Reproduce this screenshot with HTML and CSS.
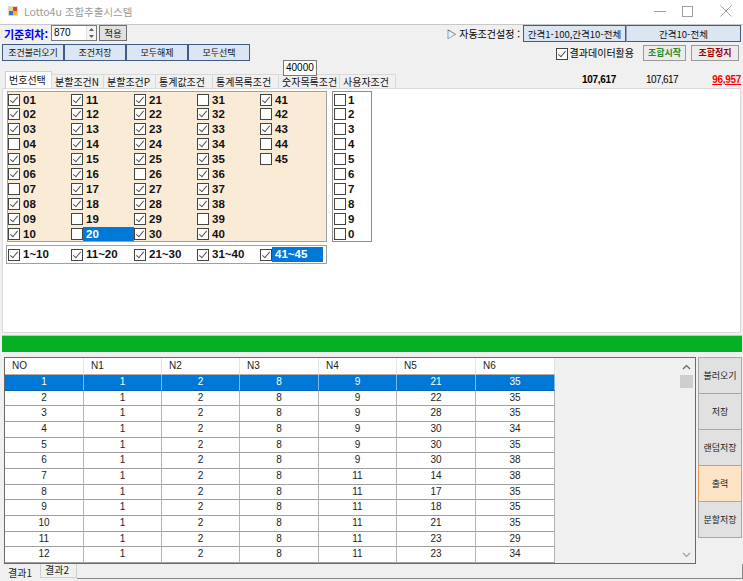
FILE: index.html
```html
<!DOCTYPE html>
<html lang="ko">
<head>
<meta charset="utf-8">
<title>Lotto4u 조합추출시스템</title>
<link rel="stylesheet" href="styles.css">
</head>
<body>
<div class="window">
  <div class="titlebar">
    <svg class="app-icon" width="10" height="10" viewBox="0 0 10 10">
      <rect x="0" y="0" width="10" height="10" fill="#d8d8d8"/>
      <rect x="1" y="1" width="4" height="4" fill="#f4d27a"/>
      <rect x="5" y="1" width="4" height="4" fill="#e0402f"/>
      <rect x="1" y="5" width="4" height="4" fill="#3a72d8"/>
      <rect x="5" y="5" width="4" height="4" fill="#f2b531"/>
    </svg>
    <span class="title">Lotto4u 조합추출시스템</span>
    <div class="win-controls">
      <svg class="wc-min" width="12" height="10" viewBox="0 0 12 10"><line x1="0" y1="5.5" x2="12" y2="5.5" stroke="#a0a0a0" stroke-width="1"/></svg>
      <svg class="wc-max" width="11" height="11" viewBox="0 0 11 11"><rect x="0.5" y="0.5" width="10" height="10" fill="none" stroke="#a0a0a0" stroke-width="1"/></svg>
      <svg class="wc-close" width="12" height="12" viewBox="0 0 12 12"><path d="M0.5 0.5 L11.5 11.5 M11.5 0.5 L0.5 11.5" stroke="#a0a0a0" stroke-width="1"/></svg>
    </div>
  </div>

  <div class="row row1">
    <span class="round-label">기준회차:</span>
    <div class="spin">
      <span class="spin-val">870</span>
      <div class="spin-btns">
        <svg width="9" height="7" viewBox="0 0 9 7"><path d="M2 5 L4.5 2 L7 5 Z" fill="#606060"/></svg>
        <svg width="9" height="7" viewBox="0 0 9 7"><path d="M2 2 L4.5 5 L7 2 Z" fill="#606060"/></svg>
      </div>
    </div>
    <div class="btn btn-gray btn-apply">적용</div>
    <span class="auto-label">▷ 자동조건설정 :</span>
    <div class="btn btn-blue auto1">간격1-100,간격10-전체</div>
    <div class="btn btn-blue auto2">간격10-전체</div>
  </div>

  <div class="row row2">
    <div class="btn btn-blue cond">조건불러오기</div>
    <div class="btn btn-blue cond">조건저장</div>
    <div class="btn btn-blue cond">모두해제</div>
    <div class="btn btn-blue cond">모두선택</div>
    <label class="use-data"><span class="cb on"></span><span>결과데이터활용</span></label>
    <div class="btn btn-gray start">조합시작</div>
    <div class="btn btn-gray stop">조합정지</div>
  </div>

  <div class="row row3">
    <div class="limit-box">40000</div>
    <div class="tabs">
      <div class="tab active w46">번호선택</div>
      <div class="tab w52">분할조건N</div>
      <div class="tab w52">분할조건P</div>
      <div class="tab w58">통계값조건</div>
      <div class="tab w67">통계목록조건</div>
      <div class="tab w61">숫자목록조건</div>
      <div class="tab w56">사용자조건</div>
    </div>
    <div class="stats">
      <span class="stat s1">107,617</span>
      <span class="stat s2">107,617</span>
      <span class="stat s3">96,957</span>
    </div>
  </div>

  <div class="content">
    <div class="top-panels">
      <div class="num-panel">
        <div class="item"><span class="cb on"></span><span class="lab">01</span></div>
        <div class="item"><span class="cb on"></span><span class="lab">02</span></div>
        <div class="item"><span class="cb on"></span><span class="lab">03</span></div>
        <div class="item"><span class="cb"></span><span class="lab">04</span></div>
        <div class="item"><span class="cb on"></span><span class="lab">05</span></div>
        <div class="item"><span class="cb on"></span><span class="lab">06</span></div>
        <div class="item"><span class="cb"></span><span class="lab">07</span></div>
        <div class="item"><span class="cb on"></span><span class="lab">08</span></div>
        <div class="item"><span class="cb on"></span><span class="lab">09</span></div>
        <div class="item"><span class="cb on"></span><span class="lab">10</span></div>

        <div class="item"><span class="cb on"></span><span class="lab">11</span></div>
        <div class="item"><span class="cb on"></span><span class="lab">12</span></div>
        <div class="item"><span class="cb on"></span><span class="lab">13</span></div>
        <div class="item"><span class="cb on"></span><span class="lab">14</span></div>
        <div class="item"><span class="cb on"></span><span class="lab">15</span></div>
        <div class="item"><span class="cb on"></span><span class="lab">16</span></div>
        <div class="item"><span class="cb on"></span><span class="lab">17</span></div>
        <div class="item"><span class="cb on"></span><span class="lab">18</span></div>
        <div class="item"><span class="cb"></span><span class="lab">19</span></div>
        <div class="item"><span class="cb"></span><span class="lab sel">20</span></div>

        <div class="item"><span class="cb on"></span><span class="lab">21</span></div>
        <div class="item"><span class="cb on"></span><span class="lab">22</span></div>
        <div class="item"><span class="cb on"></span><span class="lab">23</span></div>
        <div class="item"><span class="cb on"></span><span class="lab">24</span></div>
        <div class="item"><span class="cb on"></span><span class="lab">25</span></div>
        <div class="item"><span class="cb"></span><span class="lab">26</span></div>
        <div class="item"><span class="cb on"></span><span class="lab">27</span></div>
        <div class="item"><span class="cb on"></span><span class="lab">28</span></div>
        <div class="item"><span class="cb on"></span><span class="lab">29</span></div>
        <div class="item"><span class="cb on"></span><span class="lab">30</span></div>

        <div class="item"><span class="cb"></span><span class="lab">31</span></div>
        <div class="item"><span class="cb on"></span><span class="lab">32</span></div>
        <div class="item"><span class="cb on"></span><span class="lab">33</span></div>
        <div class="item"><span class="cb on"></span><span class="lab">34</span></div>
        <div class="item"><span class="cb on"></span><span class="lab">35</span></div>
        <div class="item"><span class="cb on"></span><span class="lab">36</span></div>
        <div class="item"><span class="cb on"></span><span class="lab">37</span></div>
        <div class="item"><span class="cb on"></span><span class="lab">38</span></div>
        <div class="item"><span class="cb"></span><span class="lab">39</span></div>
        <div class="item"><span class="cb on"></span><span class="lab">40</span></div>

        <div class="item"><span class="cb on"></span><span class="lab">41</span></div>
        <div class="item"><span class="cb"></span><span class="lab">42</span></div>
        <div class="item"><span class="cb on"></span><span class="lab">43</span></div>
        <div class="item"><span class="cb"></span><span class="lab">44</span></div>
        <div class="item"><span class="cb"></span><span class="lab">45</span></div>
      </div>
      <div class="digit-panel">
        <div class="item"><span class="cb"></span><span class="lab">1</span></div>
        <div class="item"><span class="cb"></span><span class="lab">2</span></div>
        <div class="item"><span class="cb"></span><span class="lab">3</span></div>
        <div class="item"><span class="cb"></span><span class="lab">4</span></div>
        <div class="item"><span class="cb"></span><span class="lab">5</span></div>
        <div class="item"><span class="cb"></span><span class="lab">6</span></div>
        <div class="item"><span class="cb"></span><span class="lab">7</span></div>
        <div class="item"><span class="cb"></span><span class="lab">8</span></div>
        <div class="item"><span class="cb"></span><span class="lab">9</span></div>
        <div class="item"><span class="cb"></span><span class="lab">0</span></div>
      </div>
    </div>
    <div class="range-panel">
      <div class="item"><span class="cb on"></span><span class="lab">1~10</span></div>
      <div class="item"><span class="cb on"></span><span class="lab">11~20</span></div>
      <div class="item"><span class="cb on"></span><span class="lab">21~30</span></div>
      <div class="item"><span class="cb on"></span><span class="lab">31~40</span></div>
      <div class="item"><span class="cb on"></span><span class="lab sel">41~45</span></div>
    </div>
  </div>

  <div class="progress"><div class="progress-fill"></div></div>

  <div class="lower">
    <div class="lower-main">
      <div class="grid">
        <div class="table">
          <div class="tr th"><div>NO</div><div>N1</div><div>N2</div><div>N3</div><div>N4</div><div>N5</div><div>N6</div></div>
          <div class="tr selected"><div>1</div><div>1</div><div>2</div><div>8</div><div>9</div><div>21</div><div>35</div></div>
          <div class="tr"><div>2</div><div>1</div><div>2</div><div>8</div><div>9</div><div>22</div><div>35</div></div>
          <div class="tr"><div>3</div><div>1</div><div>2</div><div>8</div><div>9</div><div>28</div><div>35</div></div>
          <div class="tr"><div>4</div><div>1</div><div>2</div><div>8</div><div>9</div><div>30</div><div>34</div></div>
          <div class="tr"><div>5</div><div>1</div><div>2</div><div>8</div><div>9</div><div>30</div><div>35</div></div>
          <div class="tr"><div>6</div><div>1</div><div>2</div><div>8</div><div>9</div><div>30</div><div>38</div></div>
          <div class="tr"><div>7</div><div>1</div><div>2</div><div>8</div><div>11</div><div>14</div><div>38</div></div>
          <div class="tr"><div>8</div><div>1</div><div>2</div><div>8</div><div>11</div><div>17</div><div>35</div></div>
          <div class="tr"><div>9</div><div>1</div><div>2</div><div>8</div><div>11</div><div>18</div><div>35</div></div>
          <div class="tr"><div>10</div><div>1</div><div>2</div><div>8</div><div>11</div><div>21</div><div>35</div></div>
          <div class="tr"><div>11</div><div>1</div><div>2</div><div>8</div><div>11</div><div>23</div><div>29</div></div>
          <div class="tr"><div>12</div><div>1</div><div>2</div><div>8</div><div>11</div><div>23</div><div>34</div></div>
        </div>
        <div class="grid-empty"></div>
        <div class="vscroll">
          <div class="sb-arrow"><svg width="9" height="6" viewBox="0 0 9 6"><path d="M1 5 L4.5 1.5 L8 5" fill="none" stroke="#606060" stroke-width="1.2"/></svg></div>
          <div class="sb-track"><div class="sb-thumb"></div></div>
          <div class="sb-arrow"><svg width="9" height="6" viewBox="0 0 9 6"><path d="M1 1 L4.5 4.5 L8 1" fill="none" stroke="#a0a0a0" stroke-width="1.2"/></svg></div>
        </div>
      </div>
      <div class="side-buttons">
        <div class="sbtn">불러오기</div>
        <div class="sbtn">저장</div>
        <div class="sbtn">랜덤저장</div>
        <div class="sbtn print">출력</div>
        <div class="sbtn">분할저장</div>
      </div>
    </div>
    <div class="result-tabs">
      <div class="rtab active">결과1</div>
      <div class="rtab">결과2</div>
      <div class="rtab-fill"></div>
    </div>
  </div>
</div>
</body>
</html>
```

FILE: styles.css
```css
* { box-sizing: border-box; }
html, body { margin: 0; padding: 0; }
body {
  width: 743px;
  height: 581px;
  overflow: hidden;
  background: #f0f0f0;
  font-family: "Noto Sans CJK KR", "Noto Sans", sans-serif;
  font-size: 10px;
  color: #000;
}
.window {
  width: 743px;
  height: 581px;
  display: flex;
  flex-direction: column;
}

/* title bar */
.titlebar {
  height: 25px;
  background: #fff;
  border-bottom: 1px solid #c8c8c8;
  display: flex;
  align-items: center;
  flex: none;
}
.app-icon { margin-left: 8px; margin-top: -2px; }
.title {
  margin-left: 6px;
  color: #9a9a9a;
  font-size: 10.5px;
  line-height: 14px;
  margin-top: -1px;
}
.win-controls {
  margin-left: auto;
  display: flex;
  align-items: center;
  padding-right: 11px;
  margin-top: -2px;
}
.wc-min { margin-right: 16px; }
.wc-max { margin-right: 27px; }

/* generic rows */
.row { display: flex; flex: none; }
.btn {
  display: flex;
  align-items: center;
  justify-content: center;
  line-height: 12px;
  white-space: nowrap;
}
.btn-blue {
  background: #dce6f2;
  border: 1px solid #3f5d84;
  color: #111;
  font-size: 9.5px;
}
.btn-gray {
  background: #e1e1e1;
  border: 1px solid #adadad;
  color: #111;
  font-size: 9.5px;
}

/* row 1 */
.row1 { height: 17px; padding-left: 4px; align-items: flex-start; }
.round-label {
  width: 47px;
  color: #0000ff;
  font-weight: bold;
  font-size: 11px;
  line-height: 14px;
  margin-top: 2px;
}
.spin {
  width: 46px;
  height: 16px;
  background: #fff;
  border: 1px solid #7a7a7a;
  display: flex;
  justify-content: space-between;
}
.spin-val {
  font-family: "Liberation Sans", Arial, sans-serif;
  font-size: 10px;
  line-height: 13px;
  padding-left: 2px;
}
.spin-btns {
  width: 10px;
  display: flex;
  flex-direction: column;
  background: #f4f4f4;
  border-left: 1px solid #e0e0e0;
}
.spin-btns svg { display: block; }
.btn-apply {
  width: 28px;
  height: 16px;
  margin-left: 2px;
  border-color: #6f6f6f;
}
.auto-label {
  margin-left: auto;
  margin-right: 3px;
  line-height: 14px;
  margin-top: 2px;
  font-size: 10px;
}
.auto1 { width: 103px; height: 17px; }
.auto2 { width: 115px; height: 17px; margin-right: 2px; border-left-color: #8da2bd; }

/* row 2 */
.row2 { height: 17px; margin-top: 2px; padding-left: 2px; align-items: flex-start; }
.cond { width: 62px; height: 17px; font-size: 9px; }
.use-data {
  margin-left: auto;
  display: flex;
  align-items: center;
  height: 17px;
  font-size: 10px;
  line-height: 12px;
}
.use-data .cb { margin-right: 2px; margin-top: 2px; }
.start, .stop {
  height: 16px;
  margin-top: 1px;
  font-weight: bold;
  font-size: 9px;
}
.start { width: 43px; margin-left: 9px; color: #2a8a2a; border-color: #9a9a9a; background: #ececec; }
.stop { width: 48px; margin-left: 5px; margin-right: 4px; color: #9a0000; border-color: #9a9a9a; background: #ececec; }

/* row 3 */
.row3 { height: 27px; position: relative; align-items: flex-end; padding-left: 5px; }
.limit-box {
  position: absolute;
  left: 283px;
  top: -1px;
  width: 34px;
  height: 16px;
  background: #fff;
  border: 1px solid #7a7a7a;
  font-family: "Liberation Sans", Arial, sans-serif;
  font-size: 10px;
  line-height: 13px;
  padding-left: 2px;
  z-index: 2;
}
.tabs { display: flex; align-items: flex-end; }
.tab {
  height: 14px;
  border: 1px solid #d9d9d9;
  border-bottom: none;
  margin-right: -1px;
  padding-left: 3px;
  font-size: 10px;
  line-height: 13px;
  color: #111;
  white-space: nowrap;
  background: #f0f0f0;
}
.tab.active { height: 17px; background: #fff; border-color: #d0d0d0; line-height: 15px; }
.w46 { width: 47px; }
.w52 { width: 53px; }
.w56 { width: 57px; }
.w58 { width: 58px; }
.w61 { width: 62px; }
.w67 { width: 67px; }
.stats {
  margin-left: auto;
  display: flex;
  align-items: center;
  height: 17px;
  padding-right: 2px;
  font-family: "Liberation Sans", Arial, sans-serif;
  font-size: 10px;
}
.stat { text-align: right; }
.s1 { width: 60px; font-weight: bold; letter-spacing: -0.3px; }
.s2 { width: 62px; letter-spacing: -0.6px; }
.s3 { width: 63px; font-weight: bold; color: #ff0000; text-decoration: underline; letter-spacing: -0.3px; }

/* content */
.content {
  height: 245px;
  background: #fff;
  margin: 0 2px;
  border: 1px solid #d9d9d9;
  padding: 2px 0 0 4px;
  flex: none;
}
.top-panels { display: flex; }
.num-panel {
  width: 320px;
  height: 151px;
  background: #faebd7;
  border: 1px solid #a0a0a0;
  display: grid;
  grid-template-rows: repeat(10, 14.9px);
  grid-auto-flow: column;
  grid-auto-columns: 63px;
  padding-top: 0;
}
.digit-panel {
  width: 40px;
  height: 151px;
  margin-left: 5px;
  background: #fff;
  border: 1px solid #8c8c8c;
  display: grid;
  grid-template-rows: repeat(10, 14.9px);
  padding-left: 1px;
}
.item {
  display: flex;
  align-items: center;
  height: 15px;
}
.cb {
  width: 12px;
  height: 12px;
  border: 1px solid #444;
  background: #fff;
  position: relative;
  flex: none;
}
.cb.on::after {
  content: "";
  position: absolute;
  left: 3px;
  top: 0px;
  width: 3px;
  height: 7px;
  border: solid #555;
  border-width: 0 1px 1px 0;
  transform: rotate(40deg);
}
.lab {
  font-family: "Liberation Sans", Arial, sans-serif;
  font-weight: bold;
  font-size: 11.5px;
  line-height: 14px;
  height: 14px;
  padding-left: 3px;
  width: 51px;
  color: #111;
}
.digit-panel .lab { padding-left: 2px; width: auto; }
.lab.sel { background: #0078d7; color: #fff; }
.range-panel {
  width: 321px;
  height: 19px;
  margin-top: 3px;
  margin-left: -1px;
  border: 1px solid #a0a0a0;
  background: #fff;
  display: flex;
  align-items: center;
  padding-left: 1px;
}
.range-panel .item { width: 63px; }
.range-panel .lab { height: 15px; line-height: 15px; }

/* progress */
.progress {
  height: 17px;
  margin: 2px 1px 0 2px;
  border-top: 1px solid #c4c4c4;
  flex: none;
}
.progress-fill { height: 16px; background: #06b025; }

/* lower */
.lower {
  flex: 1;
  display: flex;
  flex-direction: column;
  padding-top: 5px;
}
.lower-main { display: flex; height: 207px; padding-left: 4px; }
.grid {
  width: 692px;
  height: 207px;
  border: 1px solid #6a6a6a;
  display: flex;
  background: #f0f0f0;
}
.table { width: 550px; flex: none; background: #fff; align-self: flex-start; }
.tr {
  display: grid;
  grid-template-columns: 79px 78px 78px 79px 78px 79px 79px;
  height: 15.67px;
  font-family: "Liberation Sans", Arial, sans-serif;
  font-size: 10px;
  color: #222;
}
.tr > div {
  border-right: 1px solid #b4b4b4;
  border-bottom: 1px solid #a0a0a0;
  text-align: center;
  line-height: 14px;
}
.tr.th { height: 17px; }
.tr.th > div {
  text-align: left;
  padding-left: 7px;
  line-height: 16px;
  border-right-color: #e4e4e4;
  border-bottom-color: #b0b0b0;
}
.tr.selected { background: #0078d7; color: #fff; }
.tr.selected > div { border-right-color: #7fb8e8; border-bottom-color: #0a64b4; }
.grid-empty { flex: 1; }
.vscroll {
  width: 17px;
  display: flex;
  flex-direction: column;
  background: #f0f0f0;
}
.sb-arrow {
  height: 17px;
  display: flex;
  align-items: center;
  justify-content: center;
}
.sb-track { flex: 1; padding: 0 2px; }
.sb-thumb { height: 13px; background: #cdcdcd; }
.side-buttons {
  margin-left: 2px;
  display: flex;
  flex-direction: column;
  width: 44px;
}
.sbtn {
  height: 37px;
  margin-bottom: -1px;
  background: #e1e1e1;
  border: 1px solid #a8a8a8;
  display: flex;
  align-items: center;
  justify-content: center;
  font-size: 9px;
  line-height: 12px;
  color: #222;
}
.sbtn.print { background: #fde4c6; border-color: #e29a55; position: relative; z-index: 1; }

.result-tabs {
  height: 17px;
  display: flex;
  padding-left: 4px;
}
.rtab {
  width: 37px;
  height: 14px;
  font-size: 10px;
  line-height: 12px;
  padding-left: 4px;
  color: #222;
  border: 1px solid #d0d0d0;
  border-top: none;
}
.rtab.active { border: none; height: 17px; line-height: 17px; padding-left: 4px; width: 36px; }
.rtab-fill { flex: 1; border-bottom: 1px solid #8a8a8a; border-right: 1px solid #8a8a8a; height: 15px; }
```
